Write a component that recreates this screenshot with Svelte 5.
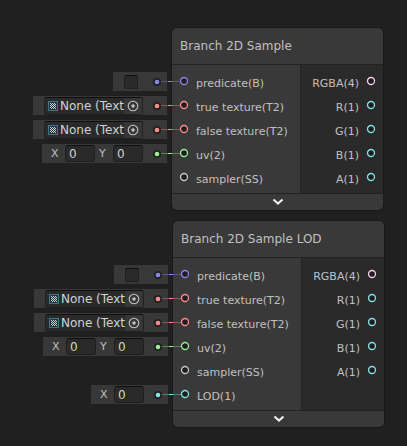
<script>
  const violet = '#8d84e8';
  const red = '#ff8b8b';
  const green = '#9aef92';
  const cyan = '#84e4e7';
  const pink = '#fbcbf4';
  const grey = '#c8c8c8';

  const inputs = [
    { name: 'predicate(B)', color: violet, editor: 'toggle' },
    { name: 'true texture(T2)', color: red, editor: 'texture' },
    { name: 'false texture(T2)', color: red, editor: 'texture' },
    { name: 'uv(2)', color: green, editor: 'vector', axes: ['X', 'Y'] },
    { name: 'sampler(SS)', color: grey }
  ];
  const outputs = [
    { name: 'RGBA(4)', color: pink },
    { name: 'R(1)', color: cyan },
    { name: 'G(1)', color: cyan },
    { name: 'B(1)', color: cyan },
    { name: 'A(1)', color: cyan }
  ];

  const nodes = [
    { title: 'Branch 2D Sample', x: 33, y: 28, inputs, outputs },
    {
      title: 'Branch 2D Sample LOD',
      x: 34,
      y: 221,
      inputs: [...inputs, { name: 'LOD(1)', color: cyan, editor: 'vector', axes: ['X'] }],
      outputs
    }
  ];

  const checks = [];
  for (let row = 0; row < 6; row++) {
    for (let col = 0; col < 6; col++) {
      if ((row + col) % 2 === 0) checks.push([col + 2, row + 2]);
    }
  }
</script>

{#snippet ring(color)}
  <svg class="ring" width="8" height="8" viewBox="0 0 8 8" aria-hidden="true">
    <circle cx="4" cy="4" r="3.5" fill="#1e1e1e" stroke={color} stroke-width="1.3" />
  </svg>
{/snippet}

<main>
  {#each nodes as node, n}
    <section class="group" style:left="{node.x}px" style:top="{node.y}px">
      <div class="editors">
        {#each node.inputs as port, i}
          <div class="slot">
            {#if port.editor}
              <div class="panel">
                {#if port.editor === 'toggle'}
                  <input class="toggle" type="checkbox" aria-label={port.name} />
                {:else if port.editor === 'texture'}
                  <div class="object">
                    <svg width="10" height="10" viewBox="0 0 10 10" aria-hidden="true">
                      <rect x="0.5" y="0.5" width="9" height="9" fill="#26333a" stroke="#3c7690" />
                      {#each checks as [x, y]}
                        <rect {x} {y} width="1" height="1" fill="#d4d4d4" />
                      {/each}
                    </svg>
                    <span class="value">None (Text</span>
                    <button class="picker" aria-label="Select {port.name}">
                      <svg width="12" height="12" viewBox="0 0 12 12" aria-hidden="true">
                        <circle cx="6" cy="6" r="4.8" fill="none" stroke="#c4c4c4" stroke-width="1.1" />
                        <circle cx="6" cy="6" r="1.7" fill="#c4c4c4" />
                      </svg>
                    </button>
                  </div>
                {:else}
                  {#each port.axes as axis}
                    <label for="f{n}-{i}-{axis}">{axis}</label>
                    <input class="number" id="f{n}-{i}-{axis}" type="text" value="0" />
                  {/each}
                {/if}
                <svg class="dot" width="8" height="8" viewBox="0 0 8 8" aria-hidden="true">
                  <circle cx="4" cy="4" r="4" fill="#202020" />
                  <circle cx="4" cy="4" r="2.3" fill={port.color} />
                </svg>
              </div>
            {/if}
          </div>
        {/each}
      </div>

      <article class="node">
        <h2>{node.title}</h2>
        <div class="ports">
          <ul class="in">
            {#each node.inputs as port}
              <li>
                {#if port.editor}<i class="wire" style:--c={port.color}></i>{/if}
                {@render ring(port.color)}
                <span class="name">{port.name}</span>
              </li>
            {/each}
          </ul>
          <ul class="out">
            {#each node.outputs as port}
              <li>
                <span class="name">{port.name}</span>
                {@render ring(port.color)}
              </li>
            {/each}
          </ul>
        </div>
        <button class="fold" aria-label="Collapse preview">
          <svg width="12" height="8" viewBox="0 0 12 8" aria-hidden="true">
            <path d="M1.5 1.5 L6 5.5 L10.5 1.5" fill="none" stroke="#eeeeee" stroke-width="2.2" />
          </svg>
        </button>
      </article>
    </section>
  {/each}
</main>

<style>
  :global(body) {
    background: #202020;
  }
  main {
    position: relative;
    min-height: 100vh;
    overflow: hidden;
    background: #202020;
    color: #c0c0c0;
    font-family: 'DejaVu Sans', Verdana, sans-serif;
    font-size: 11px;
  }
  main *,
  main *::before {
    box-sizing: border-box;
  }
  button,
  input {
    margin: 0;
    padding: 0;
    border: 0;
    font: inherit;
    color: inherit;
  }
  svg {
    display: block;
    flex: none;
    overflow: visible;
  }
  .group {
    position: absolute;
    display: flex;
  }

  .editors {
    width: 139px;
    padding: 41px 5px 0 0;
  }
  .slot {
    display: flex;
    justify-content: flex-end;
    height: 24px;
    padding-top: 3px;
  }
  .panel {
    display: flex;
    align-items: center;
    height: 19px;
    padding: 0 6px 0 9px;
    background: #383838;
  }
  .dot {
    margin-left: 10px;
  }
  .toggle {
    appearance: none;
    width: 14px;
    height: 14px;
    margin: 0 5px 0 2px;
    border: 1px solid #202020;
    border-top-color: #0f0f0f;
    border-radius: 2px;
    background: #2a2a2a;
  }
  .object {
    display: flex;
    align-items: center;
    width: 99px;
    height: 18px;
    margin-left: 2px;
    padding-left: 3px;
    border: 1px solid #202020;
    border-top-color: #0f0f0f;
    border-radius: 3px;
    background: #2a2a2a;
  }
  .value {
    flex: none;
    margin-left: 2px;
    padding-top: 1px;
    white-space: nowrap;
    font-size: 12px;
    line-height: 15px;
    color: #d2d2d2;
  }
  .picker {
    display: flex;
    align-items: center;
    justify-content: center;
    flex: 1;
    min-width: 0;
    height: 16px;
    background: #373737;
  }
  label {
    width: 8px;
    margin-right: 6px;
  }
  .number {
    width: 30px;
    height: 17px;
    padding-left: 3px;
    border: 1px solid #202020;
    border-top-color: #0f0f0f;
    border-radius: 3px;
    background: #2a2a2a;
    font-size: 12px;
    color: #d2d2d2;
  }
  .number + label {
    margin-left: 4px;
  }

  .node {
    width: 211px;
    border-radius: 5px;
    box-shadow: 0 0 0 1px #191919;
    background: #393939;
  }
  h2 {
    margin: 0;
    padding-left: 8px;
    border-bottom: 1px solid #232323;
    font-size: 12px;
    font-weight: 400;
    line-height: 36px;
  }
  .ports {
    display: flex;
    border-bottom: 1px solid #232323;
  }
  ul {
    margin: 0;
    padding: 4px 8px;
    list-style: none;
  }
  .in {
    flex: 1;
  }
  .out {
    width: 83px;
    border-left: 1px solid #232323;
    background: #2a2a2a;
  }
  li {
    position: relative;
    display: flex;
    align-items: center;
    gap: 8px;
    height: 24px;
    white-space: nowrap;
  }
  .out li {
    justify-content: flex-end;
  }
  .name {
    padding-top: 4px;
  }
  .wire {
    position: absolute;
    left: -19px;
    top: 12px;
    width: 19px;
    height: 1px;
    background: linear-gradient(to right, transparent 7px, var(--c) 7px, var(--c) 11px, transparent 11px);
  }
  .wire::before {
    content: '';
    position: absolute;
    inset: 0;
    background: var(--c);
    opacity: 0.4;
  }
  .fold {
    display: flex;
    align-items: center;
    justify-content: center;
    width: 100%;
    height: 16px;
    background: none;
  }
</style>
